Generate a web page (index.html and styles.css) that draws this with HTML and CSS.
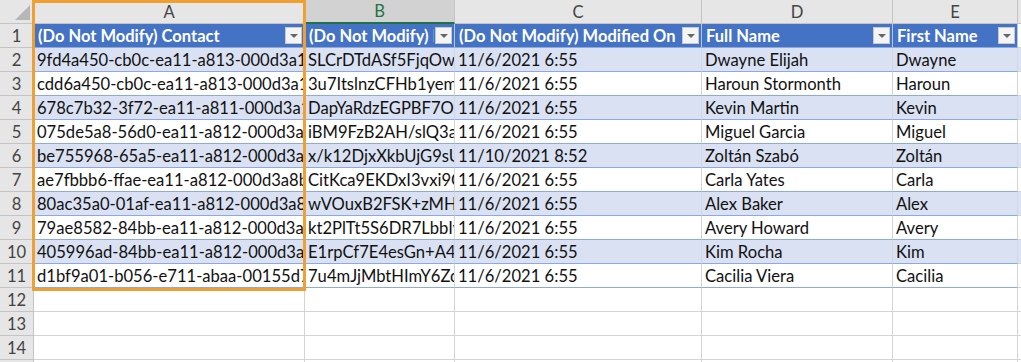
FILE: index.html
```html
<!DOCTYPE html>
<html>
<head>
<meta charset="utf-8">
<link rel="stylesheet" href="styles.css">
</head>
<body>
<div class="wrap">
  <div class="sheet">
    <div class="corner"><svg width="34" height="24" viewBox="0 0 34 24"><polygon points="15,20 30,20 30,5" fill="#b7b7b7"/></svg></div>
    <div class="colhdr">A</div>
    <div class="colhdr sel">B</div>
    <div class="colhdr">C</div>
    <div class="colhdr">D</div>
    <div class="colhdr">E</div>
    <div class="colhdr last"></div>

    <div class="rowhdr">1</div>
    <div class="th"><span class="t">(Do Not Modify) Contact</span><span class="dd"><i></i></span></div>
    <div class="th"><span class="t">(Do Not Modify) Row Checksum</span><span class="dd"><i></i></span></div>
    <div class="th"><span class="t">(Do Not Modify) Modified On</span><span class="dd"><i></i></span></div>
    <div class="th"><span class="t">Full Name</span><span class="dd"><i></i></span></div>
    <div class="th"><span class="t">First Name</span><span class="dd"><i></i></span></div>
    <div class="th last"></div>

    <div class="rowhdr">2</div>
    <div class="td band">9fd4a450-cb0c-ea11-a813-000d3a1bbd52</div>
    <div class="td band">SLCrDTdASf5FjqOw9mQ</div>
    <div class="td band">11/6/2021 6:55</div>
    <div class="td band">Dwayne Elijah</div>
    <div class="td band">Dwayne</div>
    <div class="td band last"></div>

    <div class="rowhdr">3</div>
    <div class="td">cdd6a450-cb0c-ea11-a813-000d3a1bbd52</div>
    <div class="td">3u7ItslnzCFHb1yemlw</div>
    <div class="td">11/6/2021 6:55</div>
    <div class="td">Haroun Stormonth</div>
    <div class="td">Haroun</div>
    <div class="td last"></div>

    <div class="rowhdr">4</div>
    <div class="td band">678c7b32-3f72-ea11-a811-000d3a1bbd52</div>
    <div class="td band">DapYaRdzEGPBF7O7zQ</div>
    <div class="td band">11/6/2021 6:55</div>
    <div class="td band">Kevin Martin</div>
    <div class="td band">Kevin</div>
    <div class="td band last"></div>

    <div class="rowhdr">5</div>
    <div class="td">075de5a8-56d0-ea11-a812-000d3a1bbd52</div>
    <div class="td">iBM9FzB2AH/slQ3aDq</div>
    <div class="td">11/6/2021 6:55</div>
    <div class="td">Miguel Garcia</div>
    <div class="td">Miguel</div>
    <div class="td last"></div>

    <div class="rowhdr">6</div>
    <div class="td band">be755968-65a5-ea11-a812-000d3a8bbd52</div>
    <div class="td band">x/k12DjxXkbUjG9sU+q</div>
    <div class="td band">11/10/2021 8:52</div>
    <div class="td band">Zoltán Szabó</div>
    <div class="td band">Zoltán</div>
    <div class="td band last"></div>

    <div class="rowhdr">7</div>
    <div class="td">ae7fbbb6-ffae-ea11-a812-000d3a8bbd52</div>
    <div class="td">CitKca9EKDxI3vxi9Gq</div>
    <div class="td">11/6/2021 6:55</div>
    <div class="td">Carla Yates</div>
    <div class="td">Carla</div>
    <div class="td last"></div>

    <div class="rowhdr">8</div>
    <div class="td band">80ac35a0-01af-ea11-a812-000d3a8bbd52</div>
    <div class="td band">wVOuxB2FSK+zMH+q</div>
    <div class="td band">11/6/2021 6:55</div>
    <div class="td band">Alex Baker</div>
    <div class="td band">Alex</div>
    <div class="td band last"></div>

    <div class="rowhdr">9</div>
    <div class="td">79ae8582-84bb-ea11-a812-000d3a8bbd52</div>
    <div class="td">kt2PlTt5S6DR7LbbIyq</div>
    <div class="td">11/6/2021 6:55</div>
    <div class="td">Avery Howard</div>
    <div class="td">Avery</div>
    <div class="td last"></div>

    <div class="rowhdr">10</div>
    <div class="td band">405996ad-84bb-ea11-a812-000d3a8bbd52</div>
    <div class="td band">E1rpCf7E4esGn+A4Dq</div>
    <div class="td band">11/6/2021 6:55</div>
    <div class="td band">Kim Rocha</div>
    <div class="td band">Kim</div>
    <div class="td band last"></div>

    <div class="rowhdr">11</div>
    <div class="td">d1bf9a01-b056-e711-abaa-00155d7bbd52</div>
    <div class="td">7u4mJjMbtHImY6Zdq</div>
    <div class="td">11/6/2021 6:55</div>
    <div class="td">Cacilia Viera</div>
    <div class="td">Cacilia</div>
    <div class="td last"></div>

    <div class="rowhdr">12</div>
    <div class="ec"></div><div class="ec"></div><div class="ec"></div><div class="ec"></div><div class="ec"></div><div class="ec last"></div>
    <div class="rowhdr">13</div>
    <div class="ec"></div><div class="ec"></div><div class="ec"></div><div class="ec"></div><div class="ec"></div><div class="ec last"></div>
    <div class="rowhdr">14</div>
    <div class="ec"></div><div class="ec"></div><div class="ec"></div><div class="ec"></div><div class="ec"></div><div class="ec last"></div>
    <div class="rowhdr">15</div>
    <div class="ec"></div><div class="ec"></div><div class="ec"></div><div class="ec"></div><div class="ec"></div><div class="ec last"></div>
  </div>
  <div class="highlight"></div>
</div>
</body>
</html>
```

FILE: styles.css
```css
html, body {
  margin: 0;
  padding: 0;
  background: #ffffff;
  overflow: hidden;
}

.wrap {
  position: relative;
  width: 1021px;
  height: 362px;
  overflow: hidden;
}

.sheet {
  display: grid;
  grid-template-columns: 34px 271px 150px 247px 191px 125px 1fr;
  grid-auto-rows: 24px;
  font-family: Lato, "Liberation Sans", sans-serif;
  font-size: 16.6px;
  color: #111;
}

.sheet > div {
  box-sizing: border-box;
  border-right: 1px solid #d4d4d4;
  border-bottom: 1px solid #d4d4d4;
  white-space: nowrap;
  overflow: hidden;
  line-height: 24px;
}

.corner {
  background: #e6e6e6;
  border-right-color: #c4c4c4 !important;
  border-bottom-color: #c4c4c4 !important;
}
.corner svg { display: block; }

.colhdr {
  background: #e6e6e6;
  color: #444;
  text-align: center;
  border-right-color: #c4c4c4 !important;
  border-bottom-color: #c4c4c4 !important;
}
.colhdr.sel {
  background: #d2d2d2;
  color: #217346;
  border-bottom: 2px solid #217346 !important;
  line-height: 23px;
}

.rowhdr {
  background: #e6e6e6;
  color: #444;
  text-align: center;
  border-right-color: #c4c4c4 !important;
  border-bottom-color: #c4c4c4 !important;
}

.th {
  background: #4472c4;
  color: #ffffff;
  font-weight: bold;
  font-size: 16.5px;
  display: flex;
  align-items: center;
  border-right-color: #b4c6e7 !important;
  border-bottom-color: #8ea9db !important;
  padding-left: 4px;
}
.th .t {
  flex: 1;
  overflow: hidden;
  white-space: nowrap;
  line-height: 24px;
}
.th .dd {
  flex: none;
  width: 17px;
  height: 17px;
  margin: 0 2px 0 1px;
  box-sizing: border-box;
  background: #f4f4f4;
  border: 1px solid #c8c8c8;
  display: flex;
  align-items: center;
  justify-content: center;
}
.th .dd i {
  display: block;
  width: 0;
  height: 0;
  border-left: 4px solid transparent;
  border-right: 4px solid transparent;
  border-top: 4px solid #666;
}
.th.last, .td.last {
  background: #ffffff;
  border-bottom-color: #d4d4d4 !important;
}

.td {
  padding-left: 3px;
  background: #ffffff;
  border-bottom-color: #8ea9db !important;
}
.td.band {
  background: #d9e1f2;
  border-right-color: #d0d8e8 !important;
}

.ec {
  background: #ffffff;
}

.highlight {
  position: absolute;
  left: 32px;
  top: 0;
  width: 274px;
  height: 291px;
  box-sizing: border-box;
  border: 3px solid #f0a030;
  pointer-events: none;
}
```
